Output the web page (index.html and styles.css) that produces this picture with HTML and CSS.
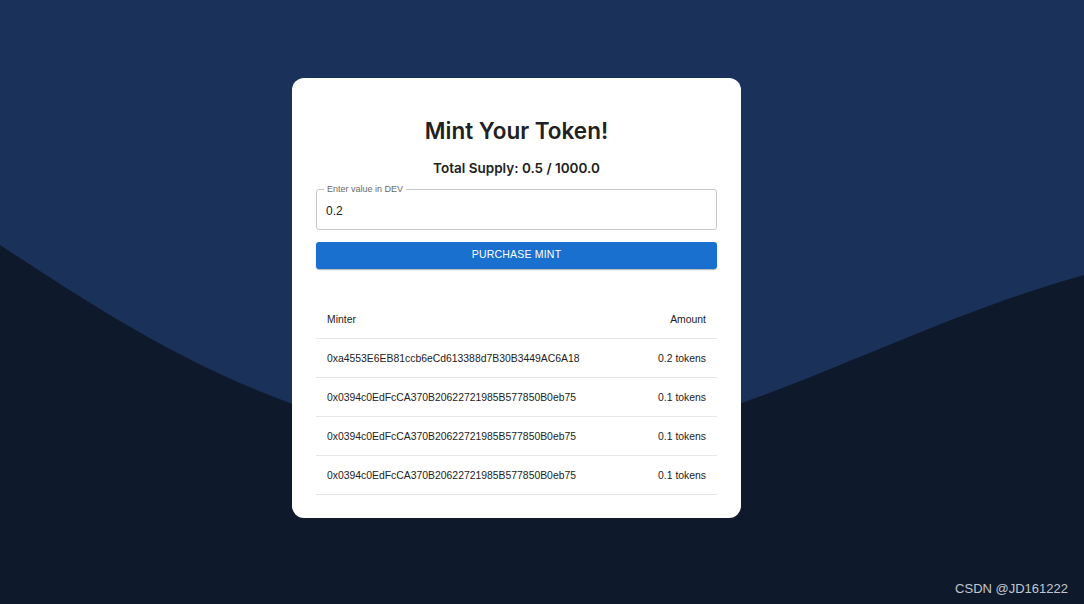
FILE: index.html
```html
<!DOCTYPE html>
<html lang="en">
<head>
    <meta charset="UTF-8">
    <meta name="viewport" content="width=device-width, initial-scale=1.0">
    <title>Mint Your Token</title>
    <link rel="stylesheet" href="styles.css">
</head>
<body>

<svg class="wave" viewBox="0 0 1084 604" preserveAspectRatio="none" aria-hidden="true">
    <path d="M0,245 C130,330 300,445 520,445 C720,445 870,335 1084,275 V604 H0 Z" fill="#0e1a2c"/>
</svg>

<main class="page">
    <div class="card">
        <h1 class="title">Mint Your Token!</h1>
        <p class="supply">Total Supply: 0.5 / 1000.0</p>

        <div class="field">
            <label for="dev-value">Enter value in DEV</label>
            <input type="text" id="dev-value" value="0.2">
        </div>

        <button class="mint-btn">Purchase Mint</button>

        <table class="minters">
            <thead>
                <tr>
                    <th>Minter</th>
                    <th class="amount">Amount</th>
                </tr>
            </thead>
            <tbody>
                <tr>
                    <td>0xa4553E6EB81ccb6eCd613388d7B30B3449AC6A18</td>
                    <td class="amount">0.2 tokens</td>
                </tr>
                <tr>
                    <td>0x0394c0EdFcCA370B20622721985B577850B0eb75</td>
                    <td class="amount">0.1 tokens</td>
                </tr>
                <tr>
                    <td>0x0394c0EdFcCA370B20622721985B577850B0eb75</td>
                    <td class="amount">0.1 tokens</td>
                </tr>
                <tr>
                    <td>0x0394c0EdFcCA370B20622721985B577850B0eb75</td>
                    <td class="amount">0.1 tokens</td>
                </tr>
            </tbody>
        </table>
    </div>
</main>

<div class="watermark">CSDN @JD161222</div>

</body>
</html>
```

FILE: styles.css
```css
body {
    font-family: 'Liberation Sans', Arial, sans-serif;
    background-color: #1a3159;
    margin: 0;
    padding: 0;
    height: 604px;
    overflow: hidden;
    position: relative;
}

.wave {
    position: absolute;
    top: 0;
    left: 0;
    width: 100%;
    height: 100%;
    display: block;
}

.page {
    position: relative;
    display: flex;
    padding: 78px 0 0 292px;
}

.card {
    width: 401px;
    background-color: #fff;
    border-radius: 12px;
    padding: 39px 24px 23px;
    color: #212121;
}

.title {
    font-family: 'Inter', sans-serif;
    font-size: 22.5px;
    font-weight: 600;
    text-align: center;
    margin: 0;
    line-height: 28px;
}

.supply {
    font-family: 'Inter', sans-serif;
    font-size: 13.5px;
    font-weight: 600;
    text-align: center;
    margin: 14px 0 0;
    line-height: 18px;
}

.field {
    margin-top: 12px;
    height: 41px;
    box-sizing: border-box;
    border: 1px solid #c8c8c8;
    border-radius: 3px;
    padding: 2px 9px 0;
    display: flex;
    align-items: center;
    position: relative;
}

.field label {
    position: absolute;
    top: -6px;
    left: 7px;
    padding: 0 3px;
    background-color: #fff;
    font-size: 9px;
    line-height: 10px;
    color: #6b6b6b;
}

.field input {
    border: none;
    outline: none;
    font-family: inherit;
    font-size: 12px;
    color: #212121;
    padding: 0;
    width: 100%;
    background: transparent;
}

.mint-btn {
    display: block;
    width: 100%;
    height: 27px;
    margin-top: 12px;
    padding: 0 0 3px;
    background-color: #1970ce;
    color: #fff;
    border: none;
    border-radius: 3px;
    font-family: inherit;
    font-size: 10.5px;
    letter-spacing: 0.2px;
    text-transform: uppercase;
    box-shadow: 0 2px 1px -1px rgba(0, 0, 0, 0.2), 0 1px 2px rgba(0, 0, 0, 0.14);
    cursor: pointer;
}

.minters {
    width: 100%;
    border-collapse: collapse;
    margin-top: 31px;
    font-size: 10.4px;
}

.minters th,
.minters td {
    text-align: left;
    font-weight: normal;
    padding: 0 11px;
    height: 38px;
    border-bottom: 1px solid #e6e6e6;
    color: #222;
}

.minters .amount {
    text-align: right;
}

.watermark {
    position: absolute;
    right: 16px;
    bottom: 8px;
    font-size: 13px;
    color: #c3c7cf;
}
```
